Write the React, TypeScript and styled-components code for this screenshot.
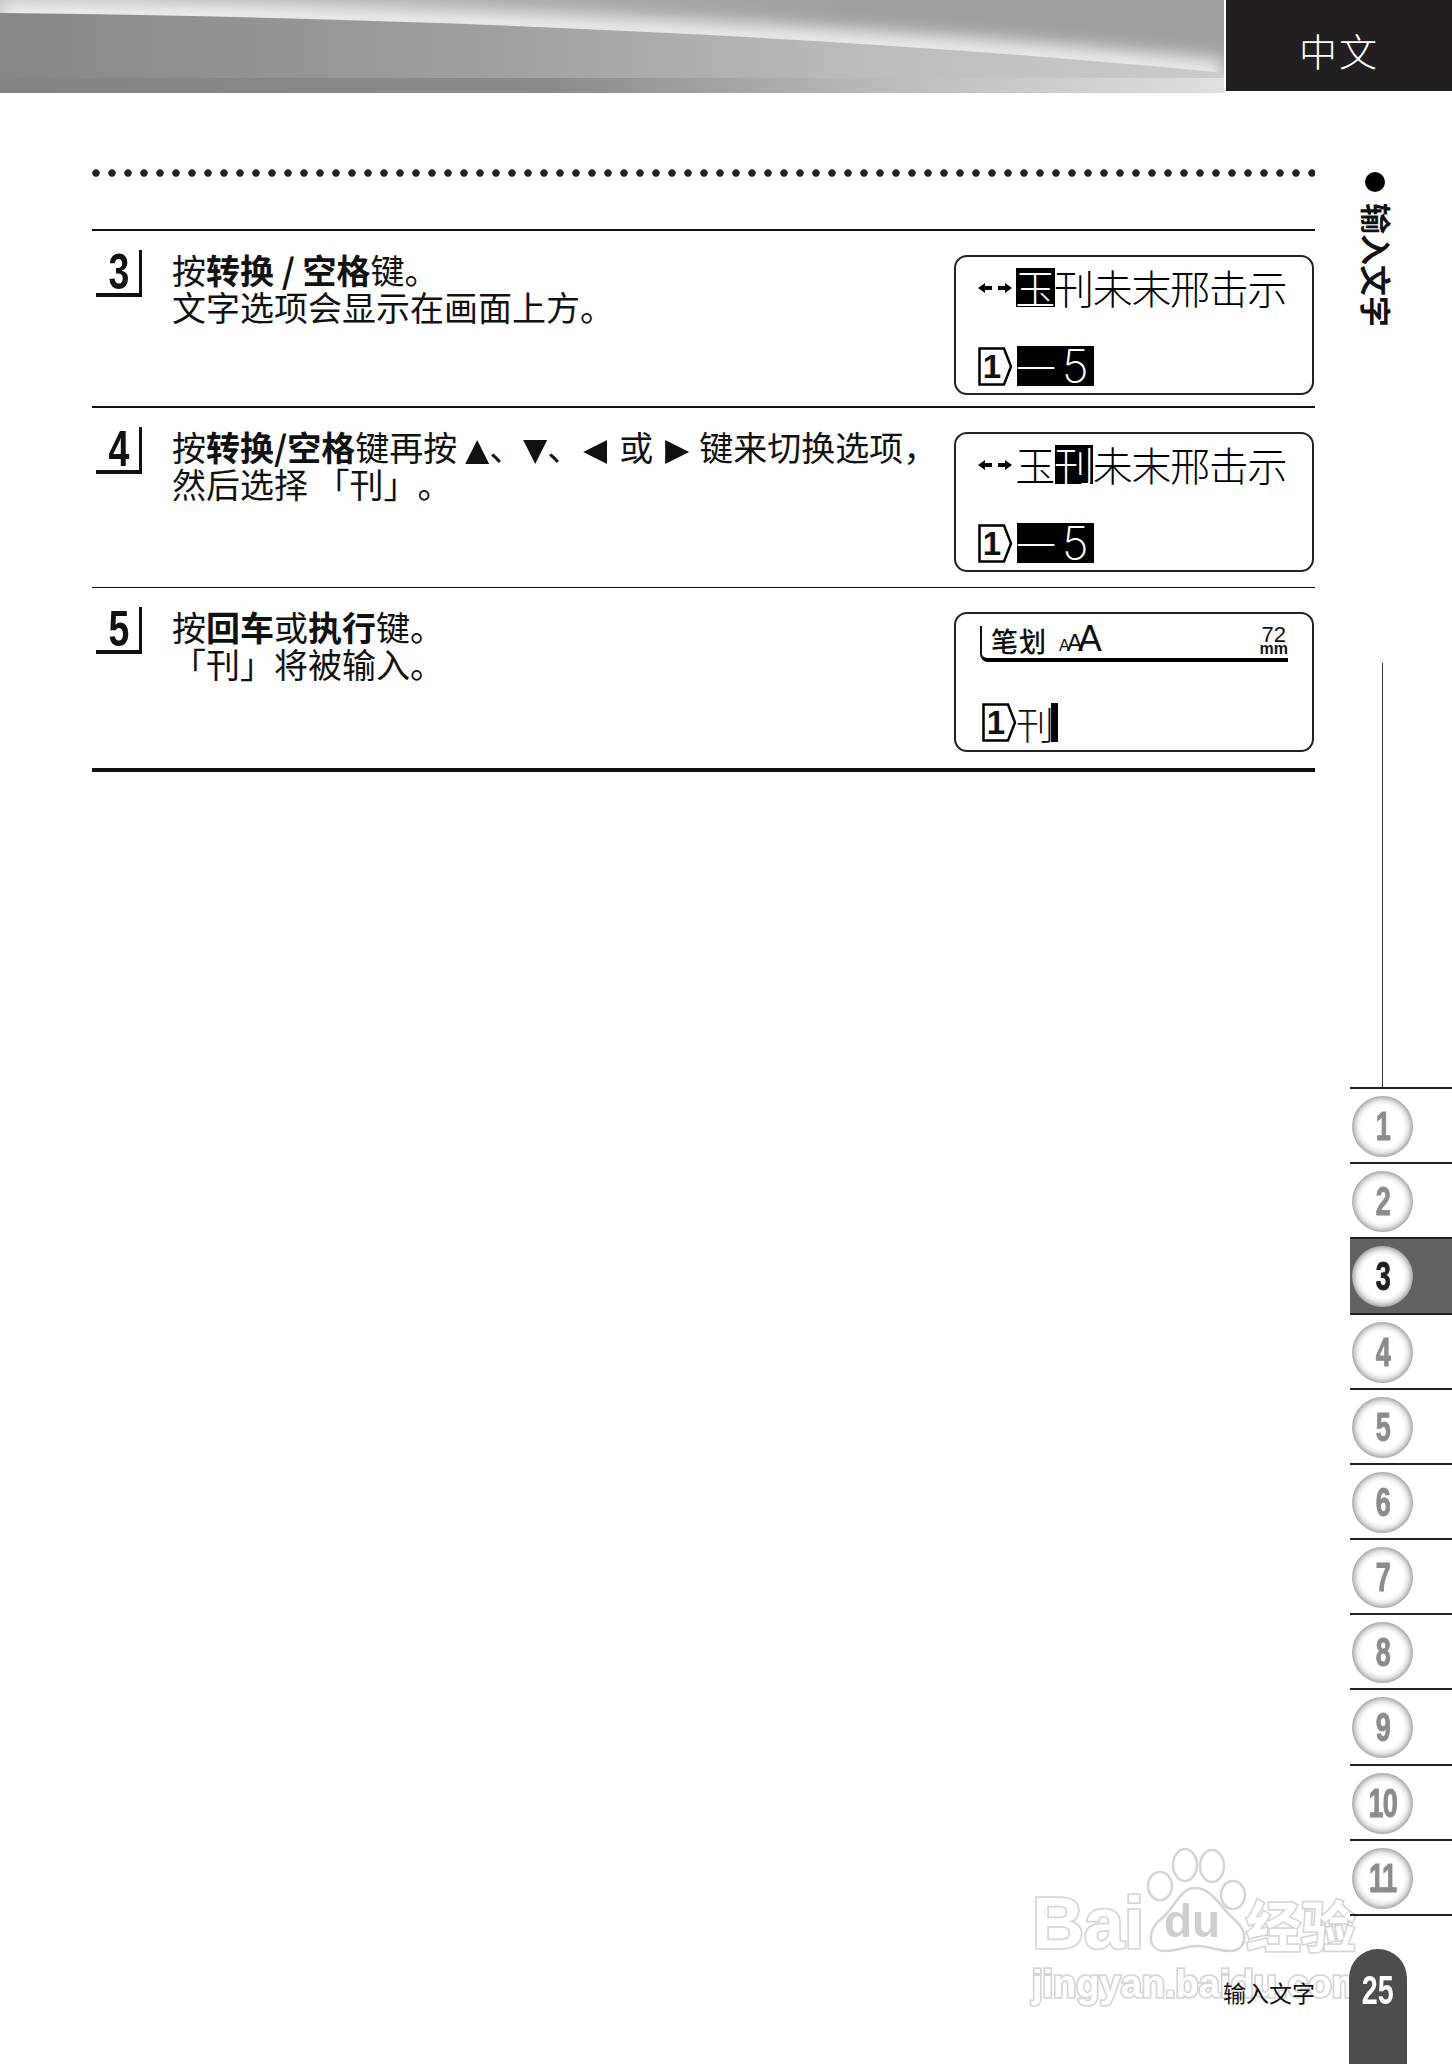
import styled, { createGlobalStyle } from "styled-components";

const CJK = `"Noto Sans CJK SC", "Liberation Sans", sans-serif`;
const LATIN = `"Liberation Sans", sans-serif`;

const GlobalStyle = createGlobalStyle`
  html, body {
    margin: 0;
    padding: 0;
    background: #fff;
  }
  body {
    width: 1452px;
    height: 2064px;
    overflow: hidden;
    font-family: ${CJK};
    color: #111;
  }
`;

const TABS = [1, 2, 3, 4, 5, 6, 7, 8, 9, 10, 11];
const SWOOSH = "M0 13 C400 17 850 36 1224 73";

const Candidates = ({ active }: { active: number }) => (
  <CandidateLine>
    <svg width="34" height="14" viewBox="0 0 34 14">
      <path d="M0 7 L7 2 V5 H14 V9 H7 V12 Z M34 7 L27 2 V5 H20 V9 H27 V12 Z" fill="#000" />
    </svg>
    {["玉", "刊", "未", "末", "邢", "击", "示"].map((c, i) => (
      <LcdCell key={i} $on={i === active}>
        {c}
      </LcdCell>
    ))}
  </CandidateLine>
);

const LineTag = () => (
  <Tag>
    <svg width="35" height="39" viewBox="0 0 35 39">
      <path d="M1.5 1.5 H26 L33 19.5 L26 37.5 H1.5 Z" fill="#fff" stroke="#000" strokeWidth="2.5" />
    </svg>
    <TagNum>1</TagNum>
  </Tag>
);

const PickLine = () => (
  <InputLine>
    <LineTag />
    <Selection>
      <SelectionDash>一</SelectionDash>
      <SelectionDigit>5</SelectionDigit>
    </Selection>
  </InputLine>
);

const App = () => {
  return (
    <>
      <GlobalStyle />
      <Header>
        <Banner>
          <svg width="1224" height="93" viewBox="0 0 1224 93">
            <defs>
              <linearGradient id="top" x1="0" y1="0" x2="1" y2="0">
                <stop offset="0" stopColor="#bcbbbb" />
                <stop offset="0.4" stopColor="#adabac" />
                <stop offset="0.7" stopColor="#a09e9f" />
                <stop offset="1" stopColor="#a09e9f" />
              </linearGradient>
              <linearGradient id="body" x1="0" y1="0" x2="1" y2="0">
                <stop offset="0" stopColor="#888787" />
                <stop offset="0.4" stopColor="#a09f9f" />
                <stop offset="0.7" stopColor="#bcbbbb" />
                <stop offset="1" stopColor="#cbcbcb" />
              </linearGradient>
              <linearGradient id="band" x1="0" y1="0" x2="1" y2="0">
                <stop offset="0" stopColor="#858484" />
                <stop offset="0.45" stopColor="#8c8b8b" />
                <stop offset="0.7" stopColor="#b8b7b7" />
                <stop offset="1" stopColor="#e0e0e0" />
              </linearGradient>
              <filter id="soft" x="-5%" y="-100%" width="110%" height="300%">
                <feGaussianBlur stdDeviation="9" />
              </filter>
            </defs>
            <rect width="1224" height="93" fill="url(#top)" />
            <path d={SWOOSH} fill="none" stroke="#f0f0f0" strokeWidth="26" filter="url(#soft)" />
            <path d={`${SWOOSH} V93 H0 Z`} fill="url(#body)" />
            <rect y="78" width="1224" height="15" fill="url(#band)" />
          </svg>
        </Banner>
        <LangTab>中文</LangTab>
      </Header>

      <Content>
        <Main>
          <Dots />
          <Row $border={2} $top={19} $h={177}>
            <StepNo>
              <span>3</span>
            </StepNo>
            <StepText>
              按<b>转换 / 空格</b>键。
              <br />
              文字选项会显示在画面上方。
            </StepText>
            <Screen>
              <Candidates active={0} />
              <PickLine />
            </Screen>
          </Row>
          <Row $border={2} $top={19} $h={181}>
            <StepNo>
              <span>4</span>
            </StepNo>
            <StepText>
              按<b>转换/空格</b>键再按
              <Tri $dir="up" $l={8} />、<Tri $dir="down" />、<Tri $dir="left" $l={2} $r={12} />或
              <Tri $dir="right" $l={12} $r={10} />键来切换选项，
              <br />
              然后选择 「刊」。
            </StepText>
            <Screen>
              <Candidates active={1} />
              <PickLine />
            </Screen>
          </Row>
          <Row $border={1} $top={19} $h={181}>
            <StepNo>
              <span>5</span>
            </StepNo>
            <StepText>
              按<b>回车</b>或<b>执行</b>键。
              <br />
              「刊」将被输入。
            </StepText>
            <Screen>
              <StatusBar>
                <StatusName>笔划</StatusName>
                <SizeIcon>
                  <SizeA $s={16} $m={0}>A</SizeA>
                  <SizeA $s={24} $m={-3}>A</SizeA>
                  <SizeA $s={36} $m={-5}>A</SizeA>
                </SizeIcon>
                <Measure>
                  <span>72</span>
                  <MeasureUnit>mm</MeasureUnit>
                </Measure>
              </StatusBar>
              <ResultLine>
                <LineTag />
                <ResultChar>刊</ResultChar>
                <Cursor />
              </ResultLine>
            </Screen>
          </Row>
          <BottomRule />
          <FooterLabel>输入文字</FooterLabel>
        </Main>

        <Side>
          <SideDot />
          <SideTitle>输入文字</SideTitle>
          <SideLine />
          <TabList>
            {TABS.map((n) => (
              <Tab key={n} $on={n === 3}>
                <Circle>
                  <CircleNum $on={n === 3}>{n}</CircleNum>
                </Circle>
              </Tab>
            ))}
          </TabList>
          <PageBadge>
            <PageNum>25</PageNum>
          </PageBadge>
        </Side>
      </Content>

      <Watermark>
        <LogoRow>
          <LogoWord>Bai</LogoWord>
          <PawBox>
            <svg width="110" height="106" viewBox="0 0 110 106">
              <g fill="#fff" stroke="#d4d4d4" strokeWidth="2.5">
                <ellipse cx="41" cy="17" rx="12" ry="16" />
                <ellipse cx="68" cy="18" rx="12" ry="16" />
                <ellipse cx="16" cy="38" rx="12" ry="14" />
                <ellipse cx="89" cy="47" rx="12" ry="14" />
                <path d="M51 40 C36 40 31 60 16 72 C3 82 3 103 21 103 C36 103 41 98 53 98 C66 98 73 103 86 103 C103 103 105 84 91 72 C76 60 69 40 51 40 Z" />
              </g>
            </svg>
            <PawWord>du</PawWord>
          </PawBox>
          <LogoCjk>经验</LogoCjk>
        </LogoRow>
        <LogoUrl>jingyan.baidu.com</LogoUrl>
      </Watermark>
    </>
  );
};

const Header = styled.header`
  display: flex;
  height: 93px;
`;

const Banner = styled.div`
  width: 1224px;
  height: 93px;
  svg {
    display: block;
  }
`;

const LangTab = styled.div`
  box-sizing: border-box;
  width: 226px;
  height: 91px;
  margin-left: 2px;
  padding-top: 8px;
  background: #231f20;
  color: #fff;
  font-size: 38px;
  font-weight: 300;
  letter-spacing: 2px;
  display: flex;
  align-items: center;
  justify-content: center;
`;

const Content = styled.div`
  display: flex;
  height: 1971px;
`;

const Main = styled.main`
  width: 1223px;
  margin-left: 92px;
  display: flex;
  flex-direction: column;
`;

const Dots = styled.div`
  height: 8px;
  margin: 76px 0 52px;
  background: radial-gradient(circle at 4px 4px, #222 3.4px, transparent 4px) repeat-x;
  background-size: 16px 8px;
`;

const Row = styled.section<{ $border: number; $top: number; $h: number }>`
  box-sizing: border-box;
  height: ${(p) => p.$h}px;
  border-top: ${(p) => p.$border}px solid #111;
  padding: ${(p) => p.$top}px 0 0 4px;
  display: flex;
  align-items: flex-start;
`;

const BottomRule = styled.div`
  height: 4px;
  background: #111;
`;

const StepNo = styled.div`
  box-sizing: border-box;
  flex: none;
  width: 46px;
  height: 47px;
  border-right: 3px solid #111;
  border-bottom: 4px solid #111;
  padding-left: 2px;
  font-family: ${LATIN};
  font-weight: 700;
  font-size: 50px;
  line-height: 44px;
  text-align: center;
  span {
    display: inline-block;
    transform: scaleX(0.75);
  }
`;

const StepText = styled.p`
  flex: 1;
  margin: 1px 0 0 30px;
  font-size: 34px;
  line-height: 37px;
  white-space: nowrap;
  text-spacing-trim: space-all;
  b {
    font-weight: 700;
  }
`;

const TRI_PATHS = {
  up: "polygon(50% 0, 100% 100%, 0 100%)",
  down: "polygon(0 0, 100% 0, 50% 100%)",
  left: "polygon(100% 0, 100% 100%, 0 50%)",
  right: "polygon(0 0, 100% 50%, 0 100%)",
};

const Tri = styled.i<{ $dir: keyof typeof TRI_PATHS; $l?: number; $r?: number }>`
  display: inline-block;
  width: 24px;
  height: 24px;
  margin: 0 ${(p) => p.$r ?? 0}px 0 ${(p) => p.$l ?? 0}px;
  background: #111;
  vertical-align: -3px;
  clip-path: ${(p) => TRI_PATHS[p.$dir]};
`;

const Screen = styled.div`
  box-sizing: border-box;
  flex: none;
  width: 360px;
  height: 140px;
  margin: 5px 1px 0 0;
  border: 2px solid #222;
  border-radius: 13px;
  padding: 11px 0 0 22px;
`;

const CandidateLine = styled.div`
  display: flex;
  align-items: center;
  height: 39px;
  svg {
    margin-right: 4px;
  }
`;

const LcdCell = styled.span<{ $on: boolean }>`
  display: flex;
  justify-content: center;
  width: 38.7px;
  height: 39px;
  font-size: 40px;
  line-height: 38px;
  font-weight: 300;
  background: ${(p) => (p.$on ? "#000" : "transparent")};
  color: ${(p) => (p.$on ? "#fff" : "#000")};
`;

const InputLine = styled.div`
  display: flex;
  align-items: center;
  gap: 4px;
  margin-top: 39px;
`;

const Tag = styled.div`
  position: relative;
  width: 35px;
  height: 39px;
  svg {
    display: block;
  }
`;

const TagNum = styled.span`
  position: absolute;
  left: 2px;
  top: 0;
  width: 24px;
  text-align: center;
  font-family: ${LATIN};
  font-weight: 700;
  font-size: 33px;
  line-height: 39px;
`;

const Selection = styled.div`
  width: 77px;
  height: 40px;
  background: #000;
  color: #fff;
  display: flex;
  font-size: 40px;
  font-weight: 300;
  line-height: 40px;
`;

const SelectionDash = styled.span`
  width: 38px;
  display: flex;
  justify-content: center;
`;

const SelectionDigit = styled.span`
  margin-left: 7px;
  font-family: Inter, ${LATIN};
  font-weight: 200;
  font-size: 46px;
`;

const StatusBar = styled.div`
  box-sizing: border-box;
  display: flex;
  align-items: flex-end;
  width: 308px;
  height: 36px;
  margin: 1px 0 0 2px;
  padding: 0 0 3px 9px;
  border-left: 2px solid #111;
  border-bottom: 4px solid #000;
  border-bottom-left-radius: 8px;
`;

const StatusName = styled.span`
  font-size: 27px;
  line-height: 29px;
  font-weight: 500;
  letter-spacing: 1px;
`;

const SizeIcon = styled.span`
  display: flex;
  align-items: baseline;
  margin: 0 0 -5px 12px;
  font-family: ${LATIN};
`;

const SizeA = styled.span<{ $s: number; $m: number }>`
  margin-left: ${(p) => p.$m}px;
  font-size: ${(p) => p.$s}px;
  line-height: 29px;
`;

const Measure = styled.span`
  margin-left: auto;
  display: flex;
  flex-direction: column;
  align-items: center;
  font-family: ${LATIN};
  font-size: 22px;
  line-height: 17px;
`;

const MeasureUnit = styled.span`
  font-size: 16px;
  font-weight: 700;
  line-height: 12px;
`;

const ResultLine = styled.div`
  display: flex;
  align-items: flex-end;
  margin: 41px 0 0 4px;
`;

const ResultChar = styled.span`
  display: flex;
  justify-content: center;
  width: 32px;
  margin-left: 2px;
  font-size: 38px;
  font-weight: 300;
  line-height: 38px;
`;

const Cursor = styled.span`
  width: 7px;
  height: 39px;
  background: #000;
`;

const FooterLabel = styled.div`
  position: relative;
  z-index: 2;
  margin-top: auto;
  margin-bottom: 59px;
  text-align: right;
  font-size: 23px;
  line-height: 26px;
`;

const Side = styled.aside`
  position: relative;
  z-index: 2;
  width: 102px;
  margin-left: 35px;
  display: flex;
  flex-direction: column;
`;

const SideDot = styled.div`
  width: 20px;
  height: 20px;
  margin: 79px 0 0 15px;
  border-radius: 50%;
  background: #000;
`;

const SideTitle = styled.div`
  width: 34px;
  height: 125px;
  margin: 11px 0 0 10px;
  writing-mode: vertical-rl;
  text-orientation: sideways;
  font-size: 31px;
  line-height: 34px;
  font-weight: 700;
  white-space: nowrap;
`;

const SideLine = styled.div`
  width: 1px;
  height: 424px;
  margin: 335px 0 0 32px;
  background: #333;
`;

const TabList = styled.div`
  border-bottom: 2px solid #222;
`;

const Tab = styled.div<{ $on: boolean }>`
  box-sizing: border-box;
  height: 75.2px;
  padding: 7px 0 0 2px;
  border-top: 2px solid #222;
  background: ${(p) => (p.$on ? "#636163" : "transparent")};
`;

const Circle = styled.div`
  width: 61px;
  height: 61px;
  border-radius: 50%;
  background: radial-gradient(circle closest-side, #fff 0, #fff 70%, #e8e8e8 84%, #a8a8a8 100%);
  display: flex;
  align-items: center;
  justify-content: center;
`;

const CircleNum = styled.span<{ $on: boolean }>`
  display: inline-block;
  font-family: ${LATIN};
  font-weight: 700;
  font-size: 41px;
  line-height: 1;
  letter-spacing: -1px;
  color: ${(p) => (p.$on ? "#231f20" : "#8d8b8c")};
  transform: scaleX(0.66);
  -webkit-text-stroke: 1px currentColor;
`;

const PageBadge = styled.div`
  box-sizing: border-box;
  width: 58px;
  height: 115px;
  margin: 33px 0 0 -1px;
  padding-top: 21px;
  border-radius: 29px 29px 0 0;
  background: #4d4d4d;
  text-align: center;
`;

const PageNum = styled.span`
  display: inline-block;
  font-family: ${LATIN};
  font-weight: 700;
  font-size: 41px;
  line-height: 1;
  color: #fff;
  transform: scaleX(0.7);
`;

const Watermark = styled.div`
  position: absolute;
  left: 1032px;
  top: 1850px;
  width: 335px;
  pointer-events: none;
  filter: blur(0.7px);
`;

const LogoRow = styled.div`
  display: flex;
  align-items: flex-end;
  height: 104px;
`;

const outlined = `
  color: #fff;
  -webkit-text-stroke: 3.5px #d6d6d6;
  paint-order: stroke fill;
  font-weight: 700;
`;

const LogoWord = styled.span`
  ${outlined}
  width: 112px;
  font-family: ${LATIN};
  font-size: 72px;
  line-height: 62px;
`;

const PawBox = styled.div`
  position: relative;
  width: 100px;
  height: 106px;
  svg {
    display: block;
  }
`;

const PawWord = styled.span`
  position: absolute;
  left: 20px;
  top: 50px;
  font-family: ${LATIN};
  font-size: 46px;
  line-height: 46px;
  font-weight: 700;
  color: #cfcfcf;
`;

const LogoCjk = styled.span`
  ${outlined}
  margin-left: 2px;
  font-size: 55px;
  line-height: 62px;
`;

const LogoUrl = styled.div`
  ${outlined}
  margin-top: 8px;
  font-family: ${LATIN};
  font-size: 38px;
  line-height: 44px;
`;

export default App;
